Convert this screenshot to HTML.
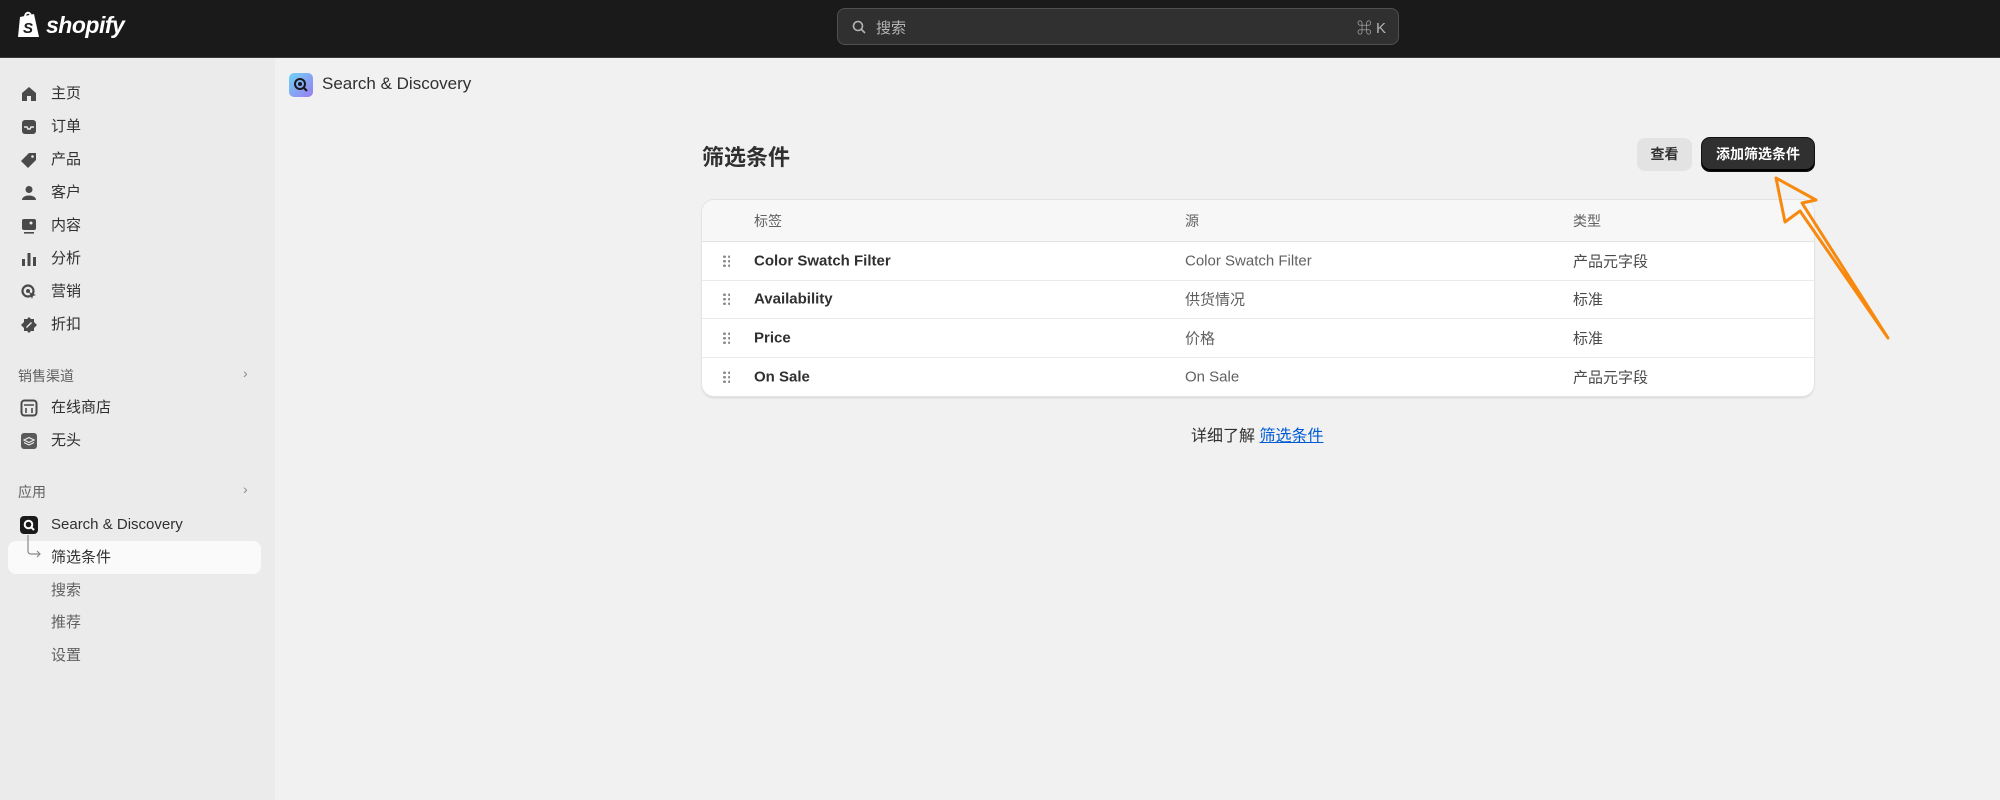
<!DOCTYPE html>
<html><head><meta charset="utf-8"><style>
*{box-sizing:border-box;margin:0;padding:0}
body{width:2000px;height:800px;background:#f1f1f1;font-family:"Liberation Sans","Noto Sans CJK SC",sans-serif;color:#303030;position:relative;overflow:hidden}
.top{position:absolute;left:0;top:0;width:2000px;height:58px;background:#1a1a1a;border-bottom:1px solid #3a3a3a}
.logo{position:absolute;left:17px;top:11px;display:flex;align-items:center;gap:4px;color:#fff;font-weight:bold;font-style:italic;font-size:23px;letter-spacing:-0.5px}
.search{position:absolute;left:837px;top:8px;width:562px;height:37px;background:#303030;border:1px solid #505050;border-radius:8px;color:#b5b5b5;font-size:15px}
.side{position:absolute;left:0;top:58px;width:275px;height:742px;background:#ebebeb}
.it{position:absolute;left:51px;font-size:15px;color:#303030;line-height:20px}
.ic{position:absolute;left:20px;width:18px;height:18px}
.sec{position:absolute;left:18px;font-size:14px;color:#616161}
.chev{position:absolute;left:243px;color:#8a8a8a;font-size:14px}
.tbl{position:absolute;left:702px;top:200px;width:1112px;height:196px;background:#fff;border-radius:12px;box-shadow:0 0 0 1px #e3e3e3,0 2px 2px rgba(0,0,0,.12);overflow:hidden}
.hd{height:42px;background:#f7f7f7;border-bottom:1px solid #e3e3e3;position:relative;font-size:14px;color:#616161}
.row{height:38.5px;border-bottom:1px solid #ebebeb;position:relative;font-size:15px}
.row:last-child{border-bottom:none}
.c{position:absolute;top:50%;transform:translateY(-50%)}
.c1{left:52px;font-weight:bold;color:#303030}
.c2{left:483px;color:#616161}
.c3{left:871px;color:#4a4a4a}
.drag{position:absolute;left:20px;top:50%;transform:translateY(-50%);width:8px;height:13px;background-image:radial-gradient(circle,#8a8a8a 1.3px,transparent 1.5px);background-size:5px 4.5px}
</style></head><body>
<div class="top">
 <div class="logo"><svg width="25" height="28" viewBox="0 0 25 28"><path d="M3 6 L17 3 L22 26 L1 26 Z" fill="#fff"/><path d="M8 6 C8 1 13 0 14 5" stroke="#fff" stroke-width="2" fill="none"/><text x="6" y="22" font-size="15" font-weight="bold" fill="#1a1a1a" font-family="Liberation Sans">S</text></svg>shopify</div>
 <div class="search"><svg style="position:absolute;left:14px;top:11px" width="14" height="14" viewBox="0 0 14 14"><circle cx="6" cy="6" r="4.5" stroke="#b5b5b5" stroke-width="1.6" fill="none"/><path d="M9.5 9.5 L13 13" stroke="#b5b5b5" stroke-width="1.6"/></svg><span style="position:absolute;left:38px;top:8px">搜索</span><span style="position:absolute;right:12px;top:8px">⌘ K</span></div>
</div>
<div class="side">
 <svg class="ic" style="top:27px" viewBox="0 0 18 18"><path d="M2 8 L9 2 L16 8 V16 H11 V11 H7 V16 H2Z" fill="#4a4a4a"/></svg><div class="it" style="top:26px">主页</div>
 <svg class="ic" style="top:60px" viewBox="0 0 18 18"><rect x="2" y="2" width="14" height="14" rx="3" fill="#4a4a4a"/><path d="M4 9 H7 L8 11 H10 L11 9 H14" stroke="#ebebeb" stroke-width="1.5" fill="none"/></svg><div class="it" style="top:59px">订单</div>
 <svg class="ic" style="top:93px" viewBox="0 0 18 18"><path d="M9 2 H16 V9 L8 17 L1 10Z" fill="#4a4a4a"/><circle cx="12.5" cy="5.5" r="1.3" fill="#ebebeb"/></svg><div class="it" style="top:92px">产品</div>
 <svg class="ic" style="top:126px" viewBox="0 0 18 18"><circle cx="9" cy="5.5" r="3.5" fill="#4a4a4a"/><path d="M2 16 C2 10 16 10 16 16Z" fill="#4a4a4a"/></svg><div class="it" style="top:125px">客户</div>
 <svg class="ic" style="top:159px" viewBox="0 0 18 18"><rect x="2" y="2" width="14" height="11" rx="2" fill="#4a4a4a"/><rect x="4" y="15" width="10" height="1.6" fill="#4a4a4a"/><circle cx="11" cy="6" r="1.5" fill="#ebebeb"/></svg><div class="it" style="top:158px">内容</div>
 <svg class="ic" style="top:192px" viewBox="0 0 18 18"><rect x="2" y="9" width="3" height="7" fill="#4a4a4a"/><rect x="7.5" y="3" width="3" height="13" fill="#4a4a4a"/><rect x="13" y="7" width="3" height="9" fill="#4a4a4a"/></svg><div class="it" style="top:191px">分析</div>
 <svg class="ic" style="top:225px" viewBox="0 0 18 18"><circle cx="8" cy="8" r="5.5" stroke="#4a4a4a" stroke-width="2.2" fill="none"/><circle cx="8" cy="8" r="2" fill="#4a4a4a"/><path d="M9 9 L16 12 L13 13 L12 16Z" fill="#4a4a4a"/></svg><div class="it" style="top:224px">营销</div>
 <svg class="ic" style="top:258px" viewBox="0 0 18 18"><path d="M9 1 L11 3 L14 3 L14 6 L17 9 L14 12 L14 15 L11 15 L9 17 L7 15 L4 15 L4 12 L1 9 L4 6 L4 3 L7 3Z" fill="#4a4a4a"/><path d="M6.5 11.5 L11.5 6.5" stroke="#ebebeb" stroke-width="1.4"/></svg><div class="it" style="top:257px">折扣</div>
 <div class="sec" style="top:308px">销售渠道</div><div class="chev" style="top:307px">›</div>
 <svg class="ic" style="top:341px" viewBox="0 0 18 18"><rect x="1.5" y="1.5" width="15" height="15" rx="3" stroke="#4a4a4a" stroke-width="2" fill="none"/><path d="M4 6 H14 M6 9 V14 M12 9 V14" stroke="#4a4a4a" stroke-width="1.6"/></svg><div class="it" style="top:340px">在线商店</div>
 <svg class="ic" style="top:374px" viewBox="0 0 18 18"><rect x="1" y="1" width="16" height="16" rx="3" fill="#5a5a5a"/><path d="M4 8 L9 5.5 L14 8 L9 10.5Z M4 10.5 L9 13 L14 10.5" stroke="#ebebeb" stroke-width="1.2" fill="none"/></svg><div class="it" style="top:373px">无头</div>
 <div class="sec" style="top:424px">应用</div><div class="chev" style="top:423px">›</div>
 <svg class="ic" style="top:458px" viewBox="0 0 18 18"><rect x="0" y="0" width="18" height="18" rx="4" fill="#1a1a1a"/><circle cx="8.5" cy="8.5" r="3.8" stroke="#fff" stroke-width="2" fill="none"/><path d="M11 11 L14 14" stroke="#fff" stroke-width="2"/></svg><div class="it" style="top:457px">Search &amp; Discovery</div>
 <div style="position:absolute;left:8px;top:483px;width:253px;height:33px;background:#fafafa;border-radius:8px"></div>
 <svg style="position:absolute;left:26px;top:477px" width="18" height="24" viewBox="0 0 18 24"><path d="M2 0 V16 Q2 19 5 19 H14 M11 16 L14 19 L11 22" stroke="#8a8a8a" stroke-width="1.2" fill="none"/></svg>
 <div class="it" style="top:490px">筛选条件</div>
 <div class="it" style="top:523px;color:#616161">搜索</div>
 <div class="it" style="top:555px;color:#616161">推荐</div>
 <div class="it" style="top:588px;color:#616161">设置</div>
</div>
<svg style="position:absolute;left:289px;top:73px" width="24" height="24" viewBox="0 0 24 24"><defs><linearGradient id="g" x1="0" y1="0" x2="1" y2="1"><stop offset="0" stop-color="#6fd3f5"/><stop offset="1" stop-color="#9a7cf2"/></linearGradient></defs><rect width="24" height="24" rx="5" fill="url(#g)"/><circle cx="11" cy="11" r="5" stroke="#1a1a1a" stroke-width="2" fill="none"/><circle cx="11" cy="11" r="2" fill="#1a1a1a"/><path d="M14.5 14.5 L18 18" stroke="#1a1a1a" stroke-width="2.2"/></svg>
<div style="position:absolute;left:322px;top:74px;font-size:17px;color:#303030">Search &amp; Discovery</div>
<div style="position:absolute;left:702px;top:140px;font-size:22px;font-weight:bold;color:#303030">筛选条件</div>
<div style="position:absolute;left:1637px;top:138px;width:55px;height:33px;background:#e3e3e3;border-radius:8px;font-size:14px;font-weight:bold;text-align:center;line-height:33px">查看</div>
<div style="position:absolute;left:1702px;top:138px;width:112px;height:33px;background:#303030;border-radius:8px;font-size:14px;font-weight:bold;color:#fff;text-align:center;line-height:33px;box-shadow:inset 0 -2px 0 #000,0 0 0 1px #111">添加筛选条件</div>
<div class="tbl">
 <div class="hd"><span class="c" style="left:52px">标签</span><span class="c" style="left:483px">源</span><span class="c" style="left:871px">类型</span></div>
 <div class="row"><div class="drag"></div><span class="c c1">Color Swatch Filter</span><span class="c c2">Color Swatch Filter</span><span class="c c3">产品元字段</span></div>
 <div class="row"><div class="drag"></div><span class="c c1">Availability</span><span class="c c2">供货情况</span><span class="c c3">标准</span></div>
 <div class="row"><div class="drag"></div><span class="c c1">Price</span><span class="c c2">价格</span><span class="c c3">标准</span></div>
 <div class="row"><div class="drag"></div><span class="c c1">On Sale</span><span class="c c2">On Sale</span><span class="c c3">产品元字段</span></div>
</div>
<div style="position:absolute;left:1191px;top:422px;font-size:16px;color:#303030">详细了解 <span style="color:#005bd3;text-decoration:underline">筛选条件</span></div>
<svg style="position:absolute;left:0;top:0" width="2000" height="800"><path d="M1776 178 L1816 200 L1802 203 L1888 338 L1800 211 L1785 222 Z" fill="none" stroke="#f7890f" stroke-width="3" stroke-linejoin="round"/></svg>
</body></html>
